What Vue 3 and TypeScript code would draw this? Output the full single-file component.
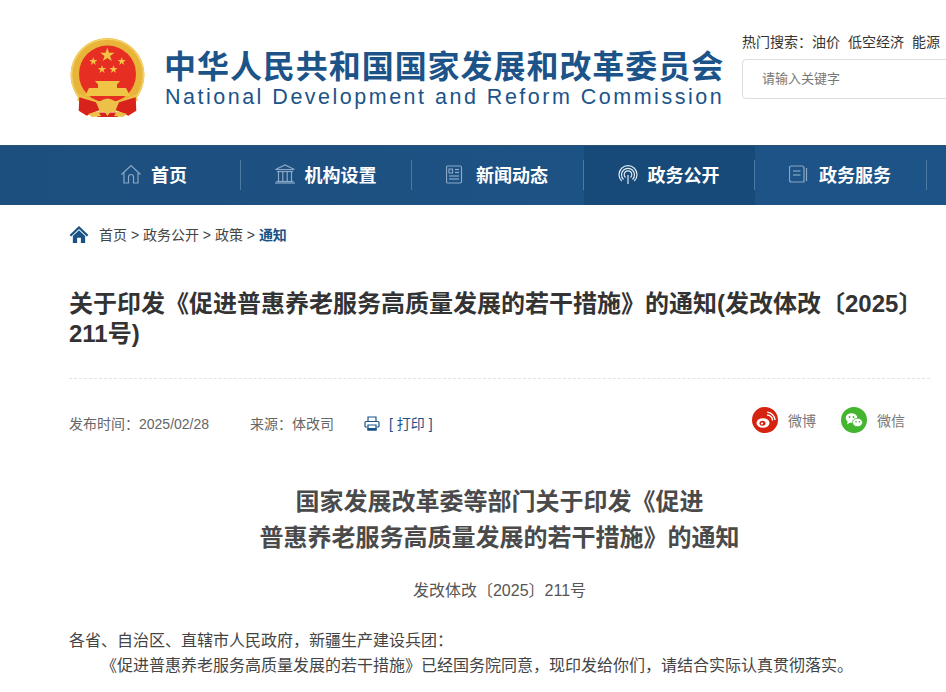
<template>
  <div class="page">
    <header class="top">
      <div class="brand">
        <svg class="emblem" viewBox="0 0 76 82" width="76" height="82">
          <circle cx="37.500" cy="38" r="37" fill="#e8b53a" />
          <circle cx="37.500" cy="38" r="36" fill="none" stroke="#f3d268" stroke-width="1.500" />
          <circle cx="37.500" cy="37" r="28.500" fill="#e62e22" />
          <g fill="#f0c445">
            <polygon points="37.300,10.500 39,15.700 44.500,15.700 40.100,18.900 41.800,24 37.300,20.900 32.800,24 34.500,18.900 30.100,15.700 35.600,15.700" />
            <polygon points="23.300,20 24.300,23 27.500,23 24.900,24.900 25.900,28 23.300,26.100 20.700,28 21.700,24.900 19.100,23 22.300,23" />
            <polygon points="51.700,20 52.700,23 55.900,23 53.300,24.900 54.300,28 51.700,26.100 49.100,28 50.100,24.900 47.500,23 50.700,23" />
            <polygon points="32,28 33,31 36.200,31 33.600,32.900 34.600,36 32,34.100 29.400,36 30.400,32.900 27.800,31 31,31" />
            <polygon points="43.500,28 44.500,31 47.700,31 45.100,32.900 46.100,36 43.500,34.100 40.900,36 41.900,32.900 39.300,31 42.500,31" />
            <path d="M25 44 H50 L47.500 47 H27.500 Z" />
            <rect x="28" y="47" width="19" height="4" />
            <path d="M19 51 H56 L60 59 H15 Z" />
          </g>
          <path d="M10 57 Q22 65 37.500 65 Q53 65 65 57 L68 63 Q54 75 37.500 75 Q21 75 7 63 Z" fill="#edc04a" />
          <path d="M9.300 60.300 L8.700 73.700 L16.700 78.700 L29.300 73 L26 65.300 Z" fill="#d8231c" />
          <path d="M65.700 60.300 L66.300 73.700 L58.300 78.700 L45.700 73 L49 65.300 Z" fill="#d8231c" />
          <path d="M28 75.500 H47 L48 80 H27 Z" fill="#d8231c" />
          <path d="M29 65 Q37.500 58 46 65 L44 71 L47 76 L41 74 L37.500 79 L34 74 L28 76 L31 71 Z" fill="#edc04a" />
          <path d="M18 77 L28 74 L31 79 L22 80 Z M57 77 L47 74 L44 79 L53 80 Z" fill="#edc04a" />
        </svg>
        <div class="brand-text">
          <div class="brand-cn">中华人民共和国国家发展和改革委员会</div>
          <div class="brand-en">National Development and Reform Commission</div>
        </div>
      </div>
      <div class="search">
        <div class="hot">
          <span>热门搜索：</span>
          <span v-for="word in hotWords" :key="word" class="hot-word">{{ word }}</span>
        </div>
        <div class="search-box">请输入关键字</div>
      </div>
    </header>

    <nav class="nav">
      <a v-for="item in navItems" :key="item.label" class="nav-item" :class="{ active: item.active }">
        <svg class="nav-icon" viewBox="0 0 22 22" width="22" height="22" fill="none" stroke="currentColor" stroke-width="1.200">
          <path v-for="(d, i) in item.paths" :key="i" :d="d" />
        </svg>
        <span>{{ item.label }}</span>
      </a>
    </nav>

    <main class="content">
      <div class="crumbs">
        <svg viewBox="0 0 20 18" width="20" height="17" fill="#1a5285">
          <path d="M10 0 L20 9.500 L18.300 11 L10 3.200 L1.700 11 L0 9.500 Z" />
          <path d="M3.500 10.500 L10 4.600 L16.500 10.500 V18 H12 V12.500 H8 V18 H3.500 Z" />
        </svg>
        <span class="trail">首页 &gt; 政务公开 &gt; 政策 &gt; <b>通知</b></span>
      </div>

      <h1 class="title">关于印发《促进普惠养老服务高质量发展的若干措施》的通知(发改体改〔2025〕211号)</h1>

      <div class="meta">
        <span>发布时间：2025/02/28</span>
        <span class="source">来源：体改司</span>
        <span class="print">
          <svg viewBox="0 0 16 15" width="16" height="15" fill="none" stroke="#1a5285" stroke-width="1.200">
            <path d="M4 5 V1 H12 V5" />
            <path d="M3.500 11 H2 Q1 11 1 10 V6.500 Q1 5.500 2 5.500 H14 Q15 5.500 15 6.500 V10 Q15 11 14 11 H12.500" />
            <path d="M4 9 H12 V14 H4 Z" />
            <path d="M4 12.500 H12 V14 H4 Z" fill="#1a5285" />
          </svg>
          <span>[ 打印 ]</span>
        </span>
        <span class="share">
          <span class="share-item">
            <svg viewBox="0 0 26 26" width="26" height="26">
              <circle cx="13" cy="13" r="13" fill="#d5230f" />
              <ellipse cx="11" cy="16" rx="6.500" ry="4.800" fill="#fff" />
              <ellipse cx="10.500" cy="16.300" rx="3" ry="2.500" fill="#d5230f" />
              <circle cx="10" cy="16.500" r="1.100" fill="#fff" />
              <path d="M15 8 A5.500 5.500 0 0 1 20.500 13.500 M15.300 5.300 A8 8 0 0 1 23 13" fill="none" stroke="#fff" stroke-width="1.400" />
            </svg>
            <span>微博</span>
          </span>
          <span class="share-item">
            <svg viewBox="0 0 26 26" width="26" height="26">
              <circle cx="13" cy="13" r="13" fill="#43b52f" />
              <ellipse cx="10.500" cy="11" rx="5.800" ry="4.800" fill="#fff" />
              <path d="M7 14 L6 17.500 L10 15 Z" fill="#fff" />
              <ellipse cx="16.500" cy="15.500" rx="5" ry="4.200" fill="#fff" stroke="#43b52f" stroke-width=".8" />
              <circle cx="8.500" cy="10" r=".9" fill="#43b52f" />
              <circle cx="12.500" cy="10" r=".9" fill="#43b52f" />
              <circle cx="15" cy="14.800" r=".8" fill="#43b52f" />
              <circle cx="18.500" cy="14.800" r=".8" fill="#43b52f" />
            </svg>
            <span>微信</span>
          </span>
        </span>
      </div>

      <h2 class="doc-title">国家发展改革委等部门关于印发《促进<br />普惠养老服务高质量发展的若干措施》的通知</h2>
      <p class="doc-no">发改体改〔2025〕211号</p>
      <p class="para">各省、自治区、直辖市人民政府，新疆生产建设兵团：</p>
      <p class="para indent">《促进普惠养老服务高质量发展的若干措施》已经国务院同意，现印发给你们，请结合实际认真贯彻落实。</p>
    </main>
  </div>
</template>

<script setup lang="ts">
interface NavItem {
  label: string
  active?: boolean
  paths: string[]
}

const hotWords = ['油价', '低空经济', '能源']

const navItems: NavItem[] = [
  { label: '首页', paths: ['M0.500 11.500 L10 2.500 L19.500 11.500', 'M3 10 V20 H7.500 V14 A2.500 2.500 0 0 1 12.500 14 V20 H17 V10'] },
  { label: '机构设置', paths: ['M0.500 6.500 L10 2 L19.500 6.500 Z', 'M2 8.500 H18', 'M3.500 9 V18', 'M7.800 9 V18', 'M12.200 9 V18', 'M16.500 9 V18', 'M0 20 H20', 'M1.500 18.500 H18.500'] },
  { label: '新闻动态', paths: ['M2 3 H14 Q15.500 3 15.500 4.500 V18.500 Q15.500 20 14 20 H2 Q0.500 20 0.500 18.500 V4.500 Q0.500 3 2 3 Z', 'M3 6 H6.500 V10 H3 Z', 'M9 6.500 H13', 'M9 9.500 H13', 'M3 13 H13', 'M3 16 H13'] },
  { label: '政务公开', active: true, paths: ['M10 12 V21', 'M7.500 14.500 A3.800 3.800 0 1 1 12.500 14.500', 'M5.500 16.500 A6.500 6.500 0 1 1 14.500 16.500', 'M3.700 18 A9 9 0 1 1 16.300 18'] },
  { label: '政务服务', paths: ['M2.500 3 H13 Q15 3 15 5 V19 H2.500 Q0.500 19 0.500 17 V5 Q0.500 3 2.500 3 Z', 'M4 8 H11.500', 'M4 12 H11.500', 'M17.500 5 V18'] },
]
</script>

<style>
html,
body {
  margin: 0;
  background: #fff;
}
</style>

<style scoped>
.page {
  width: 946px;
  height: 692px;
  overflow: hidden;
  font-family: "Liberation Sans", "Noto Sans CJK SC", sans-serif;
  color: #333;
}

.top {
  display: flex;
  height: 145px;
  padding-left: 70px;
  box-sizing: border-box;
}

.brand {
  display: flex;
  align-items: flex-start;
  width: 672px;
  padding-top: 37px;
  flex: none;
}

.emblem {
  flex: none;
}

.brand-text {
  margin-left: 18px;
  padding-top: 10px;
  color: #1c5489;
}

.brand-cn {
  font-size: 32px;
  line-height: 40px;
  font-weight: 700;
  letter-spacing: 0.95px;
  white-space: nowrap;
}

.brand-en {
  font-size: 21.500px;
  line-height: 20px;
  letter-spacing: 2.500px;
  white-space: nowrap;
  margin-left: 1px;
}

.search {
  flex: none;
  width: 300px;
  padding-top: 33px;
}

.hot {
  display: flex;
  font-size: 14px;
  line-height: 18px;
  color: #333;
  white-space: nowrap;
}

.hot-word {
  margin-right: 8px;
}

.search-box {
  width: 300px;
  height: 38px;
  margin-top: 8px;
  border: 1px solid #ddd;
  border-radius: 4px;
  padding-left: 19px;
  font-size: 13px;
  line-height: 38px;
  color: #777;
}

.nav {
  display: flex;
  height: 60px;
  padding-left: 69.300px;
  background: linear-gradient(90deg, #1d4f7e, #1d5488);
  border-top: 1px solid #2b5373;
  box-sizing: border-box;
}

.nav-item {
  position: relative;
  display: flex;
  align-items: center;
  justify-content: center;
  gap: 8px;
  width: 171.500px;
  flex: none;
  padding: 0 2px 3px 0;
  box-sizing: border-box;
  color: #fff;
  font-size: 18px;
  font-weight: 700;
}

.nav-item::after {
  content: "";
  position: absolute;
  right: 0;
  top: 14px;
  height: 30px;
  width: 1px;
  background: #4d7aa3;
}

.nav-item.active {
  background: #174a78;
}

.nav-icon {
  color: #8ba8c6;
}

.active .nav-icon {
  color: #dfe8f0;
}

.content {
  padding: 0 16px 0 69px;
}

.crumbs {
  display: flex;
  align-items: center;
  height: 58px;
  gap: 10px;
}

.trail {
  font-size: 14px;
  color: #444;
}

.trail b {
  color: #1a5285;
}

.title {
  margin: 26px 0 0;
  font-size: 24px;
  line-height: 30px;
  font-weight: 700;
  color: #333;
  padding-bottom: 29px;
  border-bottom: 1px dashed #e3e3e3;
}

.meta {
  display: flex;
  align-items: center;
  height: 26px;
  margin-top: 31px;
  font-size: 14px;
  color: #666;
}

.source {
  margin-left: 41px;
}

.print {
  display: flex;
  align-items: center;
  gap: 9px;
  margin-left: 30px;
  font-size: 14px;
  color: #1a5285;
}

.share {
  display: flex;
  align-self: flex-start;
  gap: 25px;
  margin-left: auto;
  margin-top: -3px;
  margin-right: 25px;
}

.share-item {
  display: flex;
  align-items: center;
  gap: 10px;
  font-size: 14px;
  color: #777;
}

.doc-title {
  margin: 48px 0 0;
  font-size: 24px;
  line-height: 36px;
  font-weight: 700;
  text-align: center;
  color: #4a4a4a;
}

.doc-no {
  margin: 21px 0 0;
  font-size: 16px;
  line-height: 28px;
  text-align: center;
  color: #555;
}

.para {
  margin: 0;
  font-size: 16px;
  line-height: 25px;
  color: #444;
}

.doc-no + .para {
  margin-top: 23px;
}

.indent {
  text-indent: 2em;
  white-space: nowrap;
}
</style>
